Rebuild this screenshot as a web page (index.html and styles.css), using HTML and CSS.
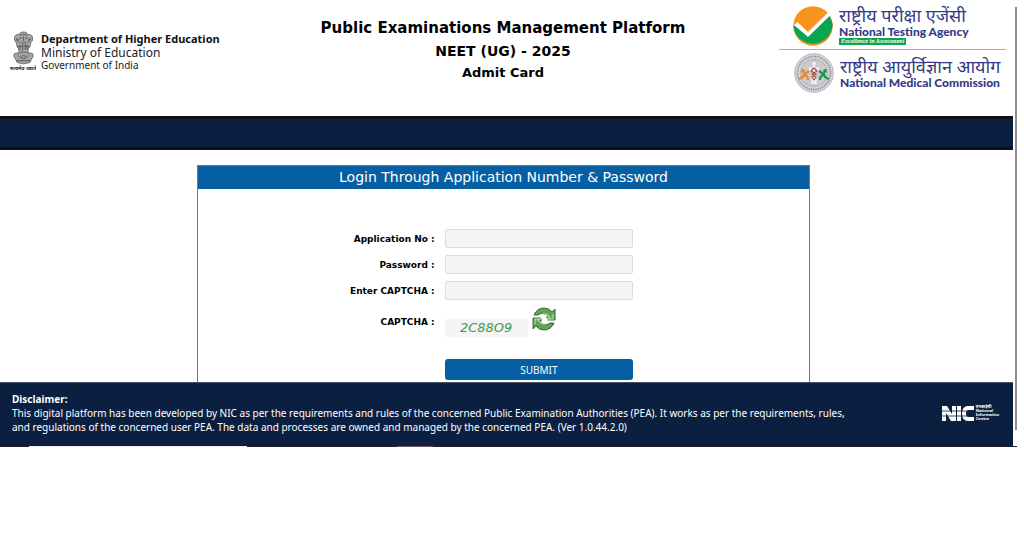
FILE: index.html
```html
<!DOCTYPE html>
<html lang="en">
<head>
<meta charset="utf-8">
<title>NEET (UG) - 2025 Admit Card</title>
<link rel="stylesheet" href="styles.css">
</head>
<body>
<div class="shell">
  <div class="page">
    <header class="top">
      <div class="dept">
        <svg class="emblem" viewBox="0 0 26 40" role="img" aria-label="State Emblem of India">
          <g fill="#a5a5a5" stroke="#555" stroke-width=".8">
            <path d="M8 4Q9 1 13 1t5 3q4-1 5 3 1 4-2 6l-1 5H6l-1-5Q2 11 3 7q1-4 5-3z"/>
            <path d="M7 17h12l-1 6 2 2H6l2-2z"/>
            <path d="M3 25Q1 28 4 31l2 4q7 3 14 0l2-4q3-3 1-6-10-3-20 0z"/>
          </g>
          <g fill="none" stroke="#444" stroke-width=".8">
            <path d="M9 5q4-3 8 0M8 8h3m4 0h3M10 12q3 3 6 0M5 8l3 5M21 8l-3 5M9 15v6m3-7v8m3-8v7m2-6v6M7 27l3 3m6 0 3-3"/>
            <circle cx="13" cy="29" r="2"/><path d="M13 6v5M5 10q2-1 3 0M18 10q2-1 3 0M5 33h16"/>
          </g>
        </svg>
        <span class="motto" lang="hi">सत्यमेव जयते</span>
        <div class="dept-text">
          <strong>Department of Higher Education</strong>
          <span class="ministry">Ministry of Education</span>
          <span class="gov">Government of India</span>
        </div>
      </div>
      <div class="titles">
        <h1>Public Examinations Management Platform</h1>
        <h2>NEET (UG) - 2025</h2>
        <h3>Admit Card</h3>
      </div>
      <div class="agencies">
        <div class="agency nta">
          <svg class="mark" viewBox="0 0 40 40" aria-hidden="true">
            <circle cx="20" cy="20" r="19.7" fill="#f7941e"/>
            <path d="M.3 20a19.700 19.700 0 0 0 39.300-2Q38 12 36 10L15 30 3 19z" fill="#0aa550"/>
            <path d="M1 19 4.500 16 15 26 35 6.500l2 3L15 31z" fill="#fff"/>
          </svg>
          <div class="agency-text">
            <span class="hindi" lang="hi">राष्ट्रीय परीक्षा एजेंसी</span>
            <strong>National Testing Agency</strong>
            <em>Excellence in Assessment</em>
          </div>
        </div>
        <div class="agency nmc">
          <svg class="mark" viewBox="0 0 40 40" aria-hidden="true">
            <circle cx="20" cy="20" r="19.300" fill="#d8d8dd" stroke="#b5b5bd"/>
            <circle cx="20" cy="20" r="16.500" fill="none" stroke="#8f8f9b" stroke-width="2" stroke-dasharray="1.300 1"/>
            <circle cx="20" cy="20" r="13.700" fill="#c9cbd0" stroke="#999" stroke-width=".6"/>
            <path d="M18 9h4l-1 6 4-1v4l-3 1 1 12h-6l1-12-3-1v-4l4 1z" fill="#eceef0"/>
            <circle cx="9" cy="18" r="1.900" fill="#f58220"/>
            <path d="M5 26q4-1 5-4 4 0 4 5M9 22l6-4" fill="none" stroke="#f58220" stroke-width="2.200"/>
            <circle cx="31" cy="18" r="1.900" fill="#149447"/>
            <path d="M35 26q-4-1-5-4-4 0-4 5m5-5-6-4" fill="none" stroke="#149447" stroke-width="2.200"/>
            <path d="m20 15 3 3-5 3 4 3-2 3m0-12-3 3 5 3-4 3 2 3" fill="none" stroke="#a34b3a" stroke-width="1.200"/>
          </svg>
          <div class="agency-text">
            <span class="hindi" lang="hi">राष्ट्रीय आयुर्विज्ञान आयोग</span>
            <strong>National Medical Commission</strong>
          </div>
        </div>
      </div>
    </header>
    <div class="band"></div>
    <main class="main">
      <form class="panel">
        <h2 class="panel-title">Login Through Application Number &amp; Password</h2>
        <div class="fields">
          <label for="app">Application No :</label><input id="app" type="text">
          <label for="pw">Password :</label><input id="pw" type="password">
          <label for="cap">Enter CAPTCHA :</label><input id="cap" type="text">
          <span class="label">CAPTCHA :</span>
          <div class="captcha">
            <span class="code">2C88O9</span>
            <button class="refresh" type="button" aria-label="Refresh CAPTCHA">
              <svg viewBox="0 0 24 24">
                <g fill="#5fa653" stroke="#2d5b2d" stroke-width=".9">
                  <path d="M2 8Q5 1 12 1q5 0 8 4l3-3v11H13l3-4q-5-5-10-1z"/>
                  <path d="M22 16q-3 7-10 7-5 0-8-4l-3 3V11h10l-3 4q5 5 10 1z"/>
                </g>
                <path d="M10 7q5-1 8 4l-3 1 6 0v-5M14 17q-5 1-8-4l3-1-6 0v5" fill="none" stroke="#b5dba8" stroke-width="1.200"/>
                <path d="m8 9 4-1 4 5-4 4-2-4z" fill="#fff"/>
              </svg>
            </button>
          </div>
          <button class="submit" type="submit">SUBMIT</button>
        </div>
      </form>
    </main>
    <footer class="footer">
      <div class="disclaimer">
        <strong>Disclaimer:</strong>
        <p>This digital platform has been developed by NIC as per the requirements and rules of the concerned Public Examination Authorities (PEA). It works as per the requirements, rules, and regulations of the concerned user PEA. The data and processes are owned and managed by the concerned PEA. (Ver 1.0.44.2.0)</p>
      </div>
      <div class="nic">
        <svg viewBox="0 0 32 15" role="img" aria-label="NIC">
          <path d="M0 15V0h5l5 8V0h4v15H9L4 7v8zM15 0h4v15h-4zM32 0v4h-5q-3 0-3 3.500t3 3.500h5v4h-6q-6 0-6-7.500T26 0z" fill="#fff"/>
          <path d="M0 5h32M0 10h32" stroke="#0b1f41" stroke-width=".8"/>
        </svg>
        <div class="nic-text"><span lang="hi">एनआईसी</span><span>National</span><span>Informatics</span><span>Centre</span></div>
      </div>
    </footer>
  </div>
  <div class="scroll"></div>
</div>
<div class="edge"></div>
</body>
</html>
```
FILE: styles.css
```css
* { box-sizing: border-box; }
body { margin: 0; background: #fff; color: #000; font-family: Verdana, "DejaVu Sans", sans-serif; }
h1, h2, h3, p { margin: 0; }
.shell { display: flex; margin-right: 7px; }
.page { flex: 1; min-width: 0; }
.scroll { width: 2px; margin: 7px 0 16px 2px; background: #8c8c8c; }

.top { display: grid; grid-template-columns: 1fr auto 1fr; min-height: 116px; padding-right: 7px; }
.dept { display: grid; grid-template-columns: 27px auto; column-gap: 4px; align-content: start; justify-content: start; padding: 31px 0 0 10px; font-family: "Noto Sans", sans-serif; color: #222; }
.emblem { width: 27px; height: 36px; }
.motto { grid-row: 2; font-size: 5px; line-height: 6px; white-space: nowrap; margin-top: -2px; font-weight: bold; }
.dept-text { grid-column: 2; grid-row: 1 / 3; display: flex; flex-direction: column; white-space: nowrap; }
.dept-text strong { font-size: 11px; line-height: 15px; color: #111; }
.ministry { font-size: 12px; line-height: 13px; }
.gov { font-size: 10px; line-height: 12px; }
.titles { text-align: center; padding-top: 18px; white-space: nowrap; }
.titles h1 { font-size: 15px; line-height: 21px; }
.titles h2 { font-size: 14px; line-height: 24px; }
.titles h3 { font-size: 13px; line-height: 20px; }
.agencies { justify-self: end; width: 227px; color: #343a85; }
.agency { display: flex; gap: 6px; }
.nta { height: 50px; padding: 6px 0 0 14px; border-bottom: 1px solid #b9aaa8; }
.nmc { padding: 3px 0 0 15px; }
.nmc .agency-text { padding-top: 4px; }
.mark { width: 40px; height: 40px; flex: none; }
.agency-text { display: flex; flex-direction: column; align-items: flex-start; white-space: nowrap; }
.hindi { font-family: "Noto Sans Devanagari", "Noto Sans", "Lohit Devanagari", sans-serif; font-size: 18px; line-height: 14px; padding: 5px 0 1px; }
.agency strong { font-family: Lato, sans-serif; font-weight: 900; font-size: 12px; line-height: 12px; }
.agency em { background: #0aa550; color: #fff; font-family: "Liberation Serif", serif; font-size: 6px; line-height: 7px; padding: 0 2px; font-weight: bold; }

.band { height: 34px; background: #0b1f41; border-top: 3px solid #111; border-bottom: 3px solid #111; }

.main { padding: 15px 6px 0 0; }
.panel { width: 60.8%; margin: 0 auto; border: 1px solid #4186bb; border-bottom: 0; }
.panel-title { background: #065fa2; color: #fff; font-size: 14px; font-weight: normal; line-height: 23px; text-align: center; }
.fields { display: grid; grid-template-columns: 237fr 189fr 166fr; column-gap: 10px; row-gap: 7px; align-items: center; padding: 40px 0 2px; font-size: 9px; }
.fields label, .label { grid-column: 1; text-align: right; font-weight: bold; }
.fields input { grid-column: 2; width: 100%; min-width: 0; height: 19px; padding: 0 4px; border: 1px solid #dcdcde; border-radius: 2px; background: #f4f4f4; font-size: 10px; }
.captcha { grid-column: 2; display: flex; align-items: flex-end; gap: 4px; height: 30px; }
.code { width: 83px; background: #f5f5f5; color: #3d9a4c; font-size: 13px; line-height: 18px; font-style: italic; text-align: center; }
.refresh { width: 24px; height: 24px; padding: 0; border: 0; background: none; align-self: flex-start; }
.refresh svg { display: block; width: 24px; height: 24px; }
.submit { grid-column: 2; height: 21px; margin-top: 15px; padding: 0; border: 0; border-radius: 3px; background: #065fa2; color: #fff; font-family: "Noto Sans", sans-serif; font-size: 10px; }

.footer { display: flex; justify-content: space-between; align-items: center; min-height: 64px; padding: 0 14px 3px 12px; background: #0b1f41; color: #fff; border-top: 1px solid #46546c; font-family: "Noto Sans", sans-serif; font-size: 10px; line-height: 14px; }
.disclaimer { max-width: 850px; }
.nic { display: flex; gap: 2px; align-items: center; flex: none; }
.nic svg { width: 32px; height: 15px; }
.nic-text { display: flex; flex-direction: column; font-size: 4px; line-height: 4px; font-weight: bold; }
.edge { height: 1px; margin-right: 7px; background: linear-gradient(90deg, #222 29px, #eee 29px, #eee 247px, #222 247px, #222 397px, #6b5560 397px, #6b5560 433px, #222 433px); }
```
